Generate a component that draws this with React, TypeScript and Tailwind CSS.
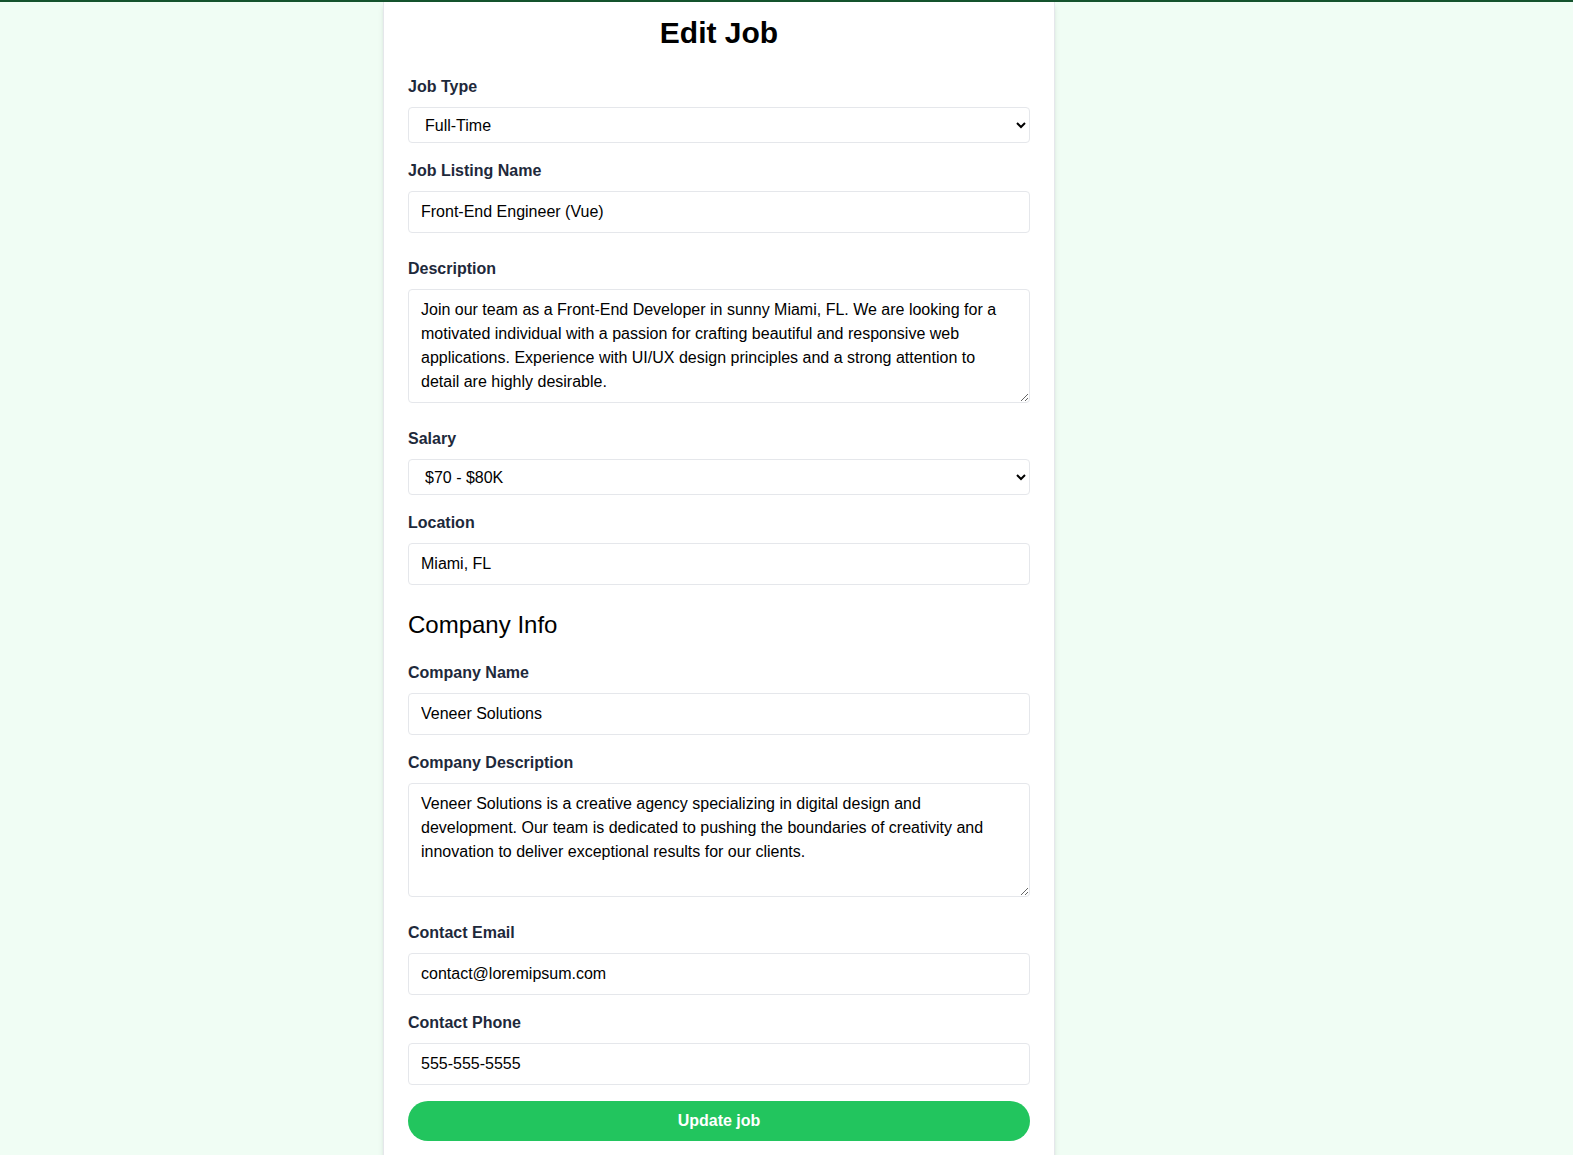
import { useState } from "react";

const labelCls = "block text-[#1e293b] font-bold mb-2";
const fieldCls =
  "border border-gray-200 rounded w-full py-2 px-3 text-black bg-white leading-6";
const selectCls = "border border-gray-200 rounded w-full h-9 px-3 text-black bg-white";

export default function App() {
  const [type, setType] = useState("Full-Time");
  const [title, setTitle] = useState("Front-End Engineer (Vue)");
  const [description, setDescription] = useState(
    "Join our team as a Front-End Developer in sunny Miami, FL. We are looking for a motivated individual with a passion for crafting beautiful and responsive web applications. Experience with UI/UX design principles and a strong attention to detail are highly desirable."
  );
  const [salary, setSalary] = useState("$70K - $80K");
  const [location, setLocation] = useState("Miami, FL");
  const [companyName, setCompanyName] = useState("Veneer Solutions");
  const [companyDescription, setCompanyDescription] = useState(
    "Veneer Solutions is a creative agency specializing in digital design and development. Our team is dedicated to pushing the boundaries of creativity and innovation to deliver exceptional results for our clients."
  );
  const [email, setEmail] = useState("contact@loremipsum.com");
  const [phone, setPhone] = useState("555-555-5555");

  const salaries = [
    "Under $50K",
    "$50K - $60K",
    "$60K - $70K",
    "$70K - $80K",
    "$80K - $90K",
    "$90K - $100K",
    "$100K - $125K",
    "$125K - $150K",
    "$150K - $175K",
    "$175K - $200K",
    "Over $200K",
  ];

  return (
    <div className="min-h-screen bg-[#f0fdf4] font-['Liberation_Sans',Arial,sans-serif] text-black">
      <div className="h-[2px] bg-[#14532d]" />
      <section className="pl-[383px]">
        <div className="w-[672px] bg-white border-x border-b border-gray-200 shadow-md rounded-b-md px-6 pt-[13px] pb-8">
          <form onSubmit={(e) => e.preventDefault()}>
            <h2 className="text-3xl leading-9 text-center font-bold mb-6">Edit Job</h2>

            <div className="mb-4">
              <label htmlFor="type" className={labelCls}>Job Type</label>
              <select
                id="type"
                value={type}
                onChange={(e) => setType(e.target.value)}
                className={selectCls}
              >
                <option value="Full-Time">Full-Time</option>
                <option value="Part-Time">Part-Time</option>
                <option value="Remote">Remote</option>
                <option value="Internship">Internship</option>
              </select>
            </div>

            <div className="mb-4">
              <label className={labelCls}>Job Listing Name</label>
              <input
                type="text"
                value={title}
                onChange={(e) => setTitle(e.target.value)}
                className={fieldCls + " mb-2"}
              />
            </div>

            {/* flex keeps the textarea margin from collapsing into the wrapper's */}
            <div className="mb-4 flex flex-col">
              <label htmlFor="description" className={labelCls}>Description</label>
              <textarea
                id="description"
                rows={4}
                value={description}
                onChange={(e) => setDescription(e.target.value)}
                className={fieldCls + " mb-2"}
              />
            </div>

            <div className="mb-4">
              <label htmlFor="salary" className={labelCls}>Salary</label>
              <select
                id="salary"
                value={salary}
                onChange={(e) => setSalary(e.target.value)}
                className={selectCls}
              >
                {salaries.map((s) => (
                  <option key={s} value={s}>
                    {s === "$70K - $80K" ? "$70 - $80K" : s}
                  </option>
                ))}
              </select>
            </div>

            <div className="mb-4">
              <label className={labelCls}>Location</label>
              <input
                type="text"
                value={location}
                onChange={(e) => setLocation(e.target.value)}
                className={fieldCls + " mb-2"}
              />
            </div>

            <h3 className="text-2xl leading-8 mb-5">Company Info</h3>

            <div className="mb-4">
              <label htmlFor="company" className={labelCls}>Company Name</label>
              <input
                type="text"
                id="company"
                value={companyName}
                onChange={(e) => setCompanyName(e.target.value)}
                className={fieldCls}
              />
            </div>

            <div className="mb-4 flex flex-col">
              <label htmlFor="company_description" className={labelCls}>Company Description</label>
              <textarea
                id="company_description"
                rows={4}
                value={companyDescription}
                onChange={(e) => setCompanyDescription(e.target.value)}
                className={fieldCls + " mb-2"}
              />
            </div>

            <div className="mb-4">
              <label htmlFor="contact_email" className={labelCls}>Contact Email</label>
              <input
                type="email"
                id="contact_email"
                value={email}
                onChange={(e) => setEmail(e.target.value)}
                className={fieldCls}
              />
            </div>

            <div className="mb-4">
              <label htmlFor="contact_phone" className={labelCls}>Contact Phone</label>
              <input
                type="tel"
                id="contact_phone"
                value={phone}
                onChange={(e) => setPhone(e.target.value)}
                className={fieldCls}
              />
            </div>

            <div>
              <button
                type="submit"
                className="bg-[#22c55e] hover:bg-[#16a34a] text-white font-bold py-2 px-4 rounded-full w-full leading-6"
              >
                Update job
              </button>
            </div>
          </form>
        </div>
      </section>
    </div>
  );
}
